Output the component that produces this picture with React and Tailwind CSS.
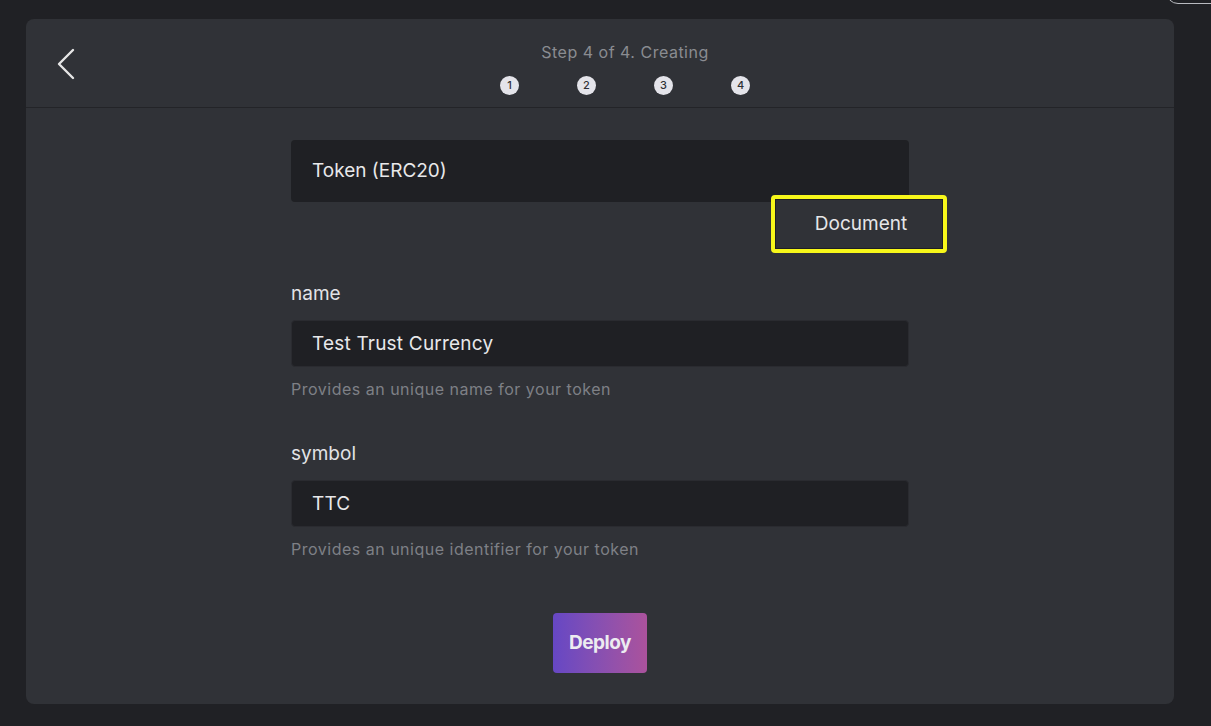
import React from 'react';

const FONT = { fontFamily: 'Inter, Roboto, "Liberation Sans", sans-serif' };

function StepDot({ n }) {
  return (
    <div className="flex h-[19px] w-[19px] items-center justify-center rounded-full bg-[#e4e4ea] text-[11px] font-medium leading-none text-[#2f3136]">
      {n}
    </div>
  );
}

function Field({ label, value, help }) {
  return (
    <div className="flex flex-col">
      <label className="text-[19px] leading-6 text-[#e2e3e6]">{label}</label>
      <div className="mt-[14px] flex h-[47px] items-center rounded-[4px] border border-[#2a2b30] bg-[#1f2024] px-5 pt-px text-[19px] tracking-[0.2px] text-[#e8e8ea]">
        {value}
      </div>
      <p className="mt-3 text-[16px] leading-5 tracking-[0.5px] text-[#7e8086]">{help}</p>
    </div>
  );
}

export default function App() {
  return (
    <div className="relative min-h-[726px] overflow-hidden bg-[#202125] pl-[26px] pr-[37px] pt-[19px] pb-[22px]" style={FONT}>
      {/* cut-off control in the top right corner */}
      <div className="absolute left-[1166px] top-[-40px] h-[44px] w-[120px] rounded-xl border border-[#b9bbc0]" />

      <div className="flex h-[685px] flex-col rounded-lg bg-[#303237]">
        {/* Header */}
        <div className="flex h-[89px] shrink-0 items-start border-b border-[#232428] px-6">
          <button className="mt-[29px] flex h-[32px] w-[50px] items-center pl-[6px] text-[#e6e6e6]">
            <svg width="20" height="32" viewBox="0 0 20 32" fill="none" stroke="currentColor" strokeWidth="2.4" strokeLinecap="round" strokeLinejoin="round">
              <path d="M17 2 L3 16 L17 30" />
            </svg>
          </button>
          <div className="flex flex-1 flex-col items-center pt-[23px]">
            <p className="text-[16px] leading-5 tracking-[0.5px] text-[#8a8c91]">Step 4 of 4. Creating</p>
            <div className="mt-[14px] flex items-center gap-[58px]">
              <StepDot n={1} />
              <StepDot n={2} />
              <StepDot n={3} />
              <StepDot n={4} />
            </div>
          </div>
        </div>

        {/* Form */}
        <div className="flex flex-1 justify-center pt-[32px]">
          <div className="flex w-[618px] flex-col">
            <div className="flex h-[62px] items-center rounded-[4px] bg-[#1f2024] px-[21px] pt-px text-[19px] text-[#e8e8ea]">
              Token (ERC20)
            </div>

            <div className="mr-[-38px] mt-[-7px] flex justify-end">
              <div className="rounded-[4px] border-4 border-[#f7f71a]">
                <button className="flex h-[50px] w-[168px] items-center justify-center border border-[#1e1f23] bg-[#303237] pl-[4px] pt-px text-[19px] text-[#e6e6e8]">
                  Document
                </button>
              </div>
            </div>

            <div className="mt-[29px]">
              <Field label="name" value="Test Trust Currency" help="Provides an unique name for your token" />
            </div>
            <div className="mt-[43px]">
              <Field label="symbol" value="TTC" help="Provides an unique identifier for your token" />
            </div>

            <div className="mt-[54px] flex justify-center">
              <button className="flex h-[60px] w-[94px] items-center justify-center rounded-[4px] bg-gradient-to-r from-[#6647c4] to-[#ab529c] text-[19px] font-bold tracking-[-0.5px] text-[#ececf0]">
                Deploy
              </button>
            </div>
          </div>
        </div>
      </div>
    </div>
  );
}
